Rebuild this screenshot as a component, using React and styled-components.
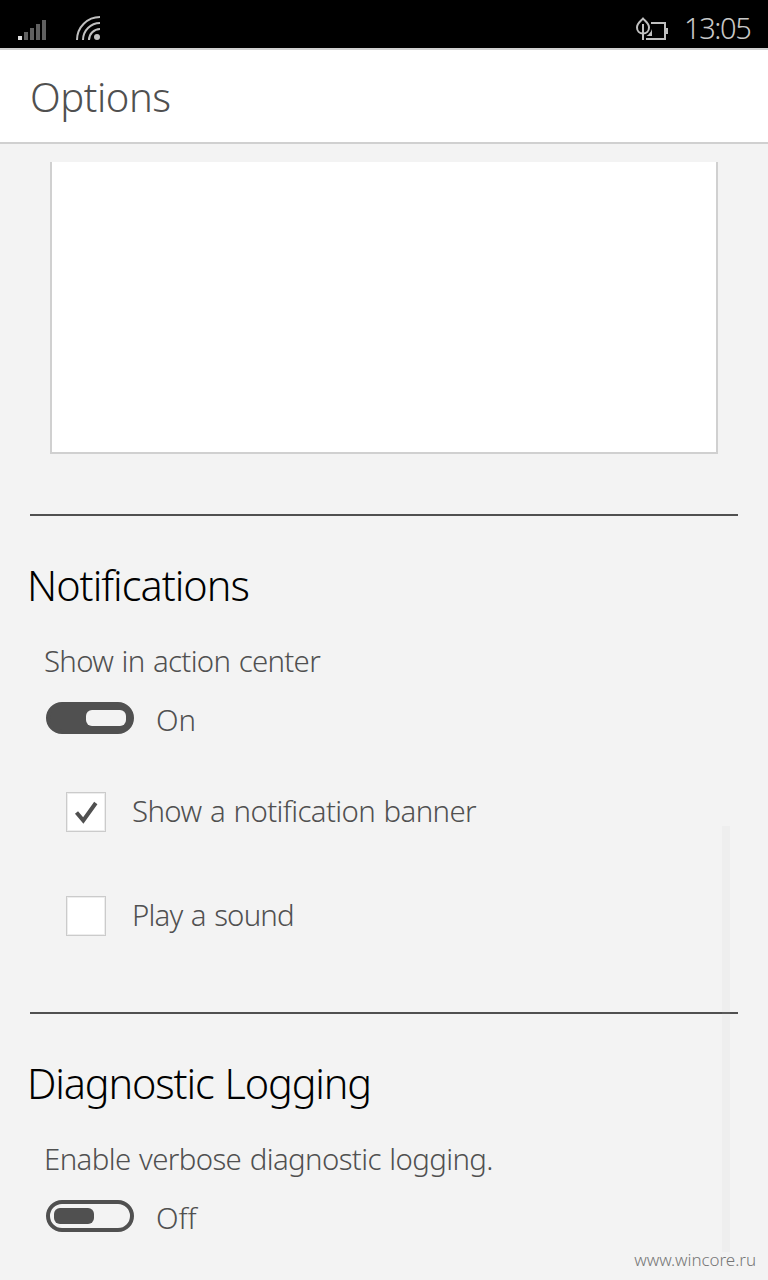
import React, { useState } from 'react';
import styled, { createGlobalStyle } from 'styled-components';

const GlobalStyle = createGlobalStyle`
  * {
    box-sizing: border-box;
  }
  body {
    margin: 0;
    background: #f3f3f3;
    font-family: 'Noto Sans', 'Open Sans', sans-serif;
    font-weight: 300;
    overflow: hidden;
  }
`;

const Phone = styled.div`
  position: relative;
  width: 768px;
  height: 1280px;
  display: flex;
  flex-direction: column;
  overflow: hidden;
  background: #f3f3f3;
  color: #505050;
`;

const StatusBar = styled.div`
  display: flex;
  flex-shrink: 0;
  justify-content: space-between;
  height: 48px;
  padding: 0 17px 0 18px;
  background: #000;
`;

const StatusGroup = styled.div`
  display: flex;
  gap: ${(props) => props.$gap}px;
`;

const Text = styled.span`
  display: block;
  width: max-content;
  white-space: pre;
  font-size: ${(props) => props.$size || 29.4}px;
  line-height: ${(props) => props.$line || 40}px;
  letter-spacing: ${(props) => props.$spacing || 0}px;
  word-spacing: 1.5px;
`;

const Clock = styled(Text)`
  width: 67px;
  padding-top: 8px;
  color: #c8c8c8;
`;

const Header = styled.header`
  flex-shrink: 0;
  height: 96px;
  padding: 20px 30px 0;
  border-top: 2px solid #d0d0d0;
  border-bottom: 2px solid #d0d0d0;
  background: #fff;
`;

const Content = styled.main`
  flex: 1;
  min-height: 0;
  padding: 18px 30px 0;
`;

const TextBox = styled.div`
  height: 292px;
  margin: 0 20px 60px;
  border: 2px solid #d0d0d0;
  border-top: none;
  background: #fff;
`;

const Section = styled.section`
  height: 498px;
  padding-top: 41px;
  border-top: 2px solid #505050;
`;

const Title = styled(Text)`
  margin-left: -3px;
  color: #000;
`;

const Label = styled(Text)`
  margin: 28px 0 21px 14px;
`;

const ToggleRow = styled.div`
  display: flex;
  align-items: center;
  gap: 22px;
  height: 32px;
  margin-left: 16px;
`;

const Track = styled.button`
  display: flex;
  align-items: center;
  justify-content: ${(props) => (props.$on ? 'flex-end' : 'flex-start')};
  width: 88px;
  height: 32px;
  padding: 0 4px;
  border: 4px solid #505050;
  border-radius: 16px;
  background: ${(props) => (props.$on ? '#505050' : 'transparent')};
`;

const Thumb = styled.span`
  width: 40px;
  height: 16px;
  border-radius: 6px;
  background: ${(props) => (props.$on ? '#f3f3f3' : '#505050')};
`;

const ToggleText = styled(Text)`
  padding-top: 3px;
`;

const CheckList = styled.div`
  display: flex;
  flex-direction: column;
  gap: 64px;
  margin: 58px 0 0 36px;
`;

const CheckRow = styled.div`
  display: flex;
  align-items: flex-start;
  gap: 26px;
  height: 40px;
`;

const CheckText = styled(Text)`
  margin-top: -1px;
`;

const Box = styled.button`
  display: flex;
  width: 40px;
  height: 40px;
  padding: 0;
  border: 1px solid #cbcbcb;
  box-shadow: inset 0 0 0 1px #ededed;
  background: #fff;
`;

const ScrollThumb = styled.div`
  position: absolute;
  top: 826px;
  right: 38px;
  width: 8px;
  height: 426px;
  background: rgba(190, 190, 190, 0.09);
`;

const Watermark = styled(Text)`
  position: absolute;
  right: 12px;
  bottom: 8px;
  color: #777;
`;

const SignalIcon = () => (
  <svg width="28" height="48" viewBox="0 0 28 48">
    <path d="M0 36h4v4H0z" fill="#dedede" />
    <path d="M6 32h4v8H6zM12 28h4v12h-4zM18 24h4v16h-4zM24 20h4v20h-4z" fill="#606060" />
  </svg>
);

const WifiIcon = () => (
  <svg width="26" height="48" viewBox="0 0 26 48" fill="none" stroke="#c0c0c0" strokeWidth="2">
    <path d="M1 40A23 23 0 0 1 24 17M7 40A17 17 0 0 1 24 23M13 40A11 11 0 0 1 24 29" />
    <circle cx="21" cy="37" r="3" fill="#c0c0c0" stroke="none" />
  </svg>
);

const BatterySaverIcon = () => (
  <svg width="34" height="48" viewBox="0 0 34 48" fill="none" stroke="#c0c0c0" strokeWidth="2">
    <path d="M9 18.500C7 21 3 23 3 27.500C3 31 5.500 33.500 9 33.500C12.500 33.500 15 31 15 27.500C15 23 11 21 9 18.500Z" />
    <path d="M9 24V40" />
    <path d="M17 23H31V39H12" />
    <path d="M32 28h2v6h-2z" fill="#c0c0c0" stroke="none" />
    <path d="M18 29V36H12.500C15 34.500 17 32 18 29Z" fill="#c0c0c0" stroke="none" />
  </svg>
);

const CheckIcon = () => (
  <svg width="38" height="38" viewBox="0 0 38 38" fill="none" stroke="#505050" strokeWidth="4">
    <path d="M9.500 19.500L16.300 27.500L28.800 10" />
  </svg>
);

const Toggle = ({ initial }) => {
  const [on, setOn] = useState(initial);
  return (
    <ToggleRow>
      <Track $on={on} onClick={() => setOn(!on)}>
        <Thumb $on={on} />
      </Track>
      <ToggleText $spacing={-0.1}>{on ? 'On' : 'Off'}</ToggleText>
    </ToggleRow>
  );
};

const CheckOption = ({ initial, text, spacing }) => {
  const [checked, setChecked] = useState(initial);
  return (
    <CheckRow>
      <Box onClick={() => setChecked(!checked)}>{checked && <CheckIcon />}</Box>
      <CheckText $spacing={spacing}>{text}</CheckText>
    </CheckRow>
  );
};

const App = () => {
  return (
    <>
      <GlobalStyle />
      <Phone>
        <StatusBar>
          <StatusGroup $gap={30}>
            <SignalIcon />
            <WifiIcon />
          </StatusGroup>
          <StatusGroup $gap={16}>
            <BatterySaverIcon />
            <Clock $size={29} $spacing={-1.4}>13:05</Clock>
          </StatusGroup>
        </StatusBar>
        <Header>
          <Text $size={40} $line={54} $spacing={-0.45}>Options</Text>
        </Header>
        <Content>
          <TextBox />
          <Section>
            <Title $size={41.4} $line={56} $spacing={-1}>Notifications</Title>
            <Label $spacing={-0.7}>Show in action center</Label>
            <Toggle initial />
            <CheckList>
              <CheckOption initial text="Show a notification banner" spacing={-0.63} />
              <CheckOption initial={false} text="Play a sound" spacing={-0.8} />
            </CheckList>
          </Section>
          <Section>
            <Title $size={41.4} $line={56} $spacing={-1.15}>Diagnostic Logging</Title>
            <Label $spacing={-0.62}>Enable verbose diagnostic logging.</Label>
            <Toggle initial={false} />
          </Section>
        </Content>
        <ScrollThumb />
        <Watermark $size={17} $line={24} $spacing={-0.05}>www.wincore.ru</Watermark>
      </Phone>
    </>
  );
};

export default App;
